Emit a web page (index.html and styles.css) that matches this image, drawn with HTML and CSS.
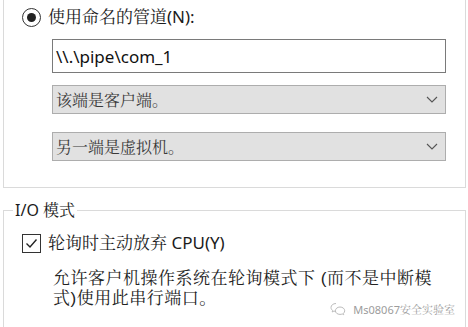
FILE: index.html
```html
<!DOCTYPE html>
<html lang="zh-CN">
<head>
<meta charset="utf-8">
<link rel="stylesheet" href="styles.css">
</head>
<body>
<div class="page">
  <div class="group top-group">
    <div class="option-row">
      <span class="radio"><span class="radio-dot"></span></span>
      <span class="label">使用命名的管道(N):</span>
    </div>
    <div class="field text-field">\\.\pipe\com_1</div>
    <div class="field select-field">
      <span>该端是客户端。</span>
      <svg class="chevron" width="12" height="7" viewBox="0 0 12 7"><polyline points="1,1 6,6 11,1" fill="none" stroke="#555" stroke-width="1.1"/></svg>
    </div>
    <div class="field select-field second">
      <span>另一端是虚拟机。</span>
      <svg class="chevron" width="12" height="7" viewBox="0 0 12 7"><polyline points="1,1 6,6 11,1" fill="none" stroke="#555" stroke-width="1.1"/></svg>
    </div>
  </div>

  <fieldset class="group io-group">
    <legend class="legend">I/O 模式</legend>
    <div class="option-row check-row">
      <span class="checkbox">
        <svg width="15" height="15" viewBox="0 0 15 15"><polyline points="2.5,7.5 6,11 12.5,3.5" fill="none" stroke="#222" stroke-width="1.4"/></svg>
      </span>
      <span class="label">轮询时主动放弃 CPU(Y)</span>
    </div>
    <div class="desc">
      <div class="desc-line">允许客户机操作系统在轮询模式下 (而不是中断模</div>
      <div class="desc-line">式)使用此串行端口。</div>
    </div>
  </fieldset>

  <div class="watermark">
    <svg width="16" height="14" viewBox="0 0 16 14"><path d="M6 1.5C3 1.5 1 3.3 1 5.5c0 1.2.6 2.2 1.6 3l-.4 1.5 1.7-.9c.6.2 1.3.3 2.1.3" fill="none" stroke="#bbb" stroke-width="1"/><path d="M10 5c2.7 0 4.7 1.7 4.7 3.8 0 1-.5 1.9-1.3 2.6l.3 1.3-1.4-.7c-.7.2-1.5.4-2.3.4-2.6 0-4.6-1.6-4.6-3.6S7.3 5 10 5z" fill="none" stroke="#bbb" stroke-width="1"/></svg>
    <span>Ms08067安全实验室</span>
  </div>
</div>
</body>
</html>
```

FILE: styles.css
```css
html, body {
  margin: 0;
  padding: 0;
  background: #ffffff;
}

body {
  font-family: "Noto Sans", "Noto Serif CJK SC", "Noto Sans CJK SC", sans-serif;
  color: #1b1b1b;
  font-size: 16px;
}

.page {
  position: relative;
  width: 468px;
  height: 327px;
  overflow: hidden;
  padding-left: 3px;
  box-sizing: border-box;
}

.top-group {
  width: 463px;
  height: 188px;
  box-sizing: border-box;
  border: 1px solid #dadada;
  border-top: none;
  padding: 7px 0 0 18px;
  display: flex;
  flex-direction: column;
}

.option-row {
  display: flex;
  align-items: center;
  gap: 7px;
  height: 20px;
}

.radio {
  width: 19px;
  height: 19px;
  box-sizing: border-box;
  border: 1.5px solid #333;
  border-radius: 50%;
  display: flex;
  align-items: center;
  justify-content: center;
}

.radio-dot {
  width: 9px;
  height: 9px;
  border-radius: 50%;
  background: #222;
}

.label {
  font-size: 17px;
  line-height: 20px;
}

.field {
  margin-left: 30px;
  width: 394px;
  box-sizing: border-box;
  display: flex;
  align-items: center;
  padding-left: 3px;
}

.text-field {
  margin-top: 12px;
  height: 34px;
  border: 1px solid #7a7a7a;
  font-size: 17px;
  color: #111;
}

.select-field {
  margin-top: 12px;
  height: 29px;
  border: 1px solid #adadad;
  background: #e1e1e1;
  color: #3a3a3a;
  font-size: 16px;
  justify-content: space-between;
  padding-right: 7px;
}

.select-field.second {
  margin-top: 18px;
}

.io-group {
  margin: 12px 0 0 0;
  width: 463px;
  box-sizing: border-box;
  border: 1px solid #dadada;
  padding: 0 0 0 18px;
  min-height: 140px;
}

.legend {
  margin-left: -9px;
  padding: 0 2px;
  font-size: 16px;
  line-height: 20px;
}

.check-row {
  margin-top: 13px;
}

.checkbox {
  width: 19px;
  height: 19px;
  box-sizing: border-box;
  border: 1.5px solid #333;
  display: flex;
  align-items: center;
  justify-content: center;
}

.desc {
  margin: 16px 0 0 31px;
  font-family: "Liberation Sans", "Noto Serif CJK SC", "Noto Sans CJK SC", sans-serif;
  font-size: 17px;
  letter-spacing: 0.5px;
  color: #222;
}

.desc-line {
  line-height: 20px;
  white-space: nowrap;
}

.watermark {
  position: absolute;
  right: 13px;
  bottom: 10px;
  display: flex;
  align-items: center;
  gap: 7px;
  font-size: 11px;
  color: #9c9c9c;
  background: #fff;
  padding-left: 4px;
}
```
